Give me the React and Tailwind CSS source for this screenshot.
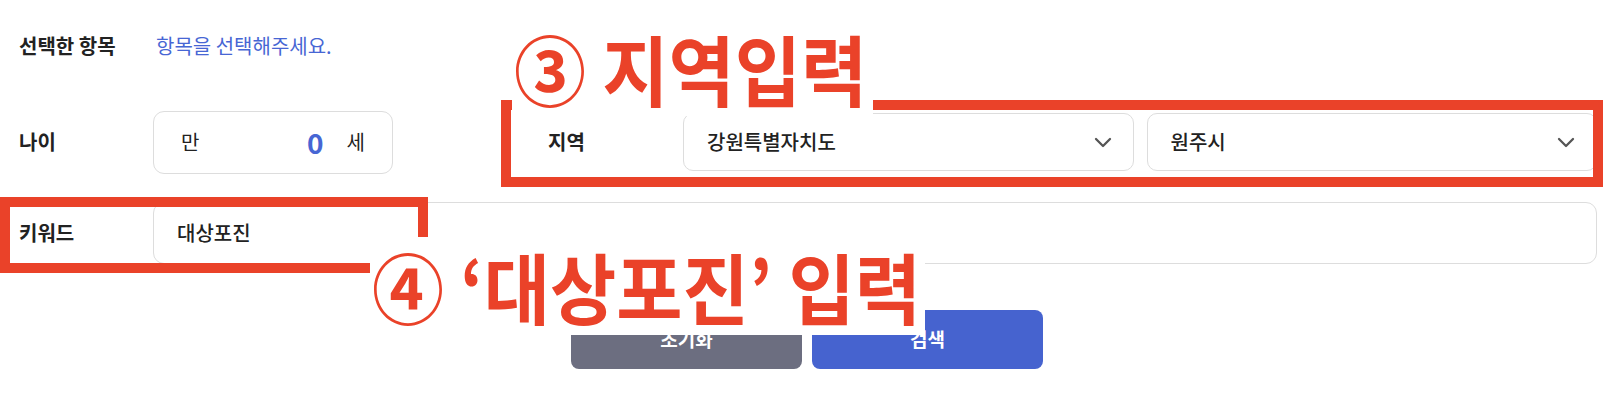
import React from 'react';

const Chevron = () => (
  <svg width="18" height="11" viewBox="0 0 18 11" fill="none">
    <path d="M2 2 L9 9 L16 2" stroke="#555555" strokeWidth="2.3" strokeLinecap="round" strokeLinejoin="round" />
  </svg>
);

const Select = ({ value }) => (
  <div className="flex-1 h-[58px] rounded-[10px] border border-[#dddddd] bg-white pl-[23px] pr-[21px] flex items-center justify-between">
    <span className="text-[20px] font-medium text-[#222222]">{value}</span>
    <Chevron />
  </div>
);

const App = () => {
  return (
    <div className="relative w-full h-[420px] bg-white overflow-hidden font-['Noto_Sans_CJK_KR','Noto_Sans',sans-serif] text-[#222222]">
      <div className="pl-[19px] pr-[17px] pt-[16px]">
        {/* 선택한 항목 */}
        <div className="h-[60px] flex items-center">
          <div className="w-[137px] text-[20px] font-semibold">선택한 항목</div>
          <div className="text-[20px] text-[#4766d4]">항목을 선택해주세요.</div>
        </div>

        {/* 나이 / 지역 */}
        <div className="mt-[34px] h-[64px] flex items-center">
          <div className="w-[134px] text-[20px] font-semibold">나이</div>
          <div className="w-[240px] h-[63px] rounded-[11px] border border-[#dddddd] flex items-center pl-[27px] pr-[27px]">
            <span className="text-[20px]">만</span>
            <span className="flex-1 text-right text-[28px] font-bold text-[#4766d4]">0</span>
            <span className="ml-[23px] text-[20px]">세</span>
          </div>
          <div className="ml-[155px] w-[135px] text-[20px] font-semibold">지역</div>
          <div className="flex-1 flex gap-[13px]">
            <Select value="강원특별자치도" />
            <Select value="원주시" />
          </div>
        </div>

        {/* 키워드 */}
        <div className="mt-[28px] h-[62px] flex items-center">
          <div className="w-[134px] text-[20px] font-semibold">키워드</div>
          <div className="flex-1 h-[62px] rounded-[11px] border border-[#dddddd] flex items-center pl-[23px]">
            <span className="text-[20px] font-medium">대상포진</span>
          </div>
        </div>
      </div>

      {/* 버튼 */}
      <div className="mt-[46px] flex justify-center gap-[10px]">
        <button className="w-[231px] h-[59px] rounded-[8px] bg-[#6c6e80] text-white text-[19px] font-bold">초기화</button>
        <button className="w-[231px] h-[59px] rounded-[8px] bg-[#4663cf] text-white text-[19px] font-bold">검색</button>
      </div>

      {/* 안내 표시 ③ */}
      <div className="absolute left-[501px] top-[100px] w-[1102px] h-[87px] border-[10px] border-[#ea4229]" />
      <div className="absolute left-[512px] top-[20px] w-[361px] h-[96px] bg-white flex items-center pl-[2px] text-[#ea4229] whitespace-nowrap">
        <span className="text-[72px] font-bold leading-none scale-y-[1.08]">③ 지역입력</span>
      </div>

      {/* 안내 표시 ④ */}
      <div className="absolute left-0 top-[197px] w-[428px] h-[76px] border-[10px] border-[#ea4229]" />
      <div className="absolute left-[370px] top-[237px] w-[555px] h-[98px] bg-white flex items-center pl-[2px] text-[#ea4229] whitespace-nowrap">
        <span className="text-[72px] font-bold leading-none scale-y-[1.08]">④ ‘대상포진’ 입력</span>
      </div>
    </div>
  );
};

export default App;
